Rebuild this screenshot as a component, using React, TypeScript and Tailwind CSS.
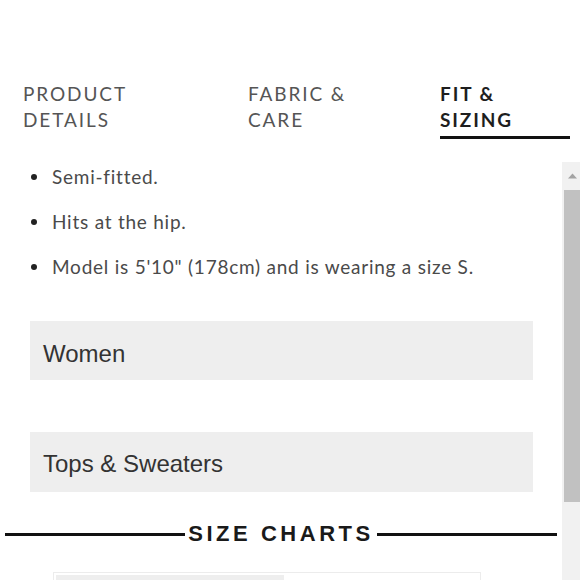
import React from 'react';

const TABS = [
  { label: ['PRODUCT', 'DETAILS'], width: 'w-[225px]', active: false },
  { label: ['FABRIC &', 'CARE'], width: 'w-[192px]', active: false },
  { label: ['FIT &', 'SIZING'], width: 'w-[130px]', active: true },
];

const FIT_NOTES = ['Semi-fitted.', 'Hits at the hip.', 'Model is 5\'10" (178cm) and is wearing a size S.'];

function Scrollbar() {
  return (
    <div className="flex w-[18px] shrink-0 flex-col bg-[#f1f1f1]">
      <div className="flex h-[28px] items-center justify-center pl-[2px]">
        <svg width="9" height="6" viewBox="0 0 9 6">
          <path d="M0 5.5 L4.5 0.5 L9 5.5 Z" fill="#a3a3a3" />
        </svg>
      </div>
      <div className="ml-[2px] h-[312px] bg-[#c1c1c1]" />
    </div>
  );
}

export default function App() {
  return (
    <div className="h-[580px] w-[580px] overflow-hidden bg-white">
      <nav className="flex pl-[23px] pt-[81px] font-['Lato',sans-serif]">
        {TABS.map((tab) => (
          <div key={tab.label[0]} className={tab.width}>
            <div
              className={
                tab.active
                  ? 'border-b-[3px] border-[#111] pb-[3px] text-[19px] font-bold leading-[26px] tracking-[0.1em] text-[#1e1e1e]'
                  : 'pb-[6px] text-[19px] leading-[26px] tracking-[0.1em] text-[#555]'
              }
            >
              {tab.label[0]}
              <br />
              {tab.label[1]}
            </div>
          </div>
        ))}
      </nav>

      <div className="mt-[23px] flex h-[418px] overflow-hidden">
        <div className="flex flex-1 flex-col">
          <ul className="flex flex-col gap-[20px] pl-[31px] pt-[2px] font-['Lato',sans-serif] text-[19px] leading-[25px] tracking-[0.04em] text-[#4a4a4a]">
            {FIT_NOTES.map((note) => (
              <li key={note} className="flex items-center">
                <span className="mr-[15px] h-[6px] w-[6px] rounded-full bg-[#222]" />
                {note}
              </li>
            ))}
          </ul>

          <div className="mt-[42px] flex flex-col gap-[52px] pl-[30px] pr-[29px] font-['Liberation_Sans',Arial,sans-serif] text-[24px] text-[#333]">
            <div className="flex h-[59px] items-center bg-[#eeeeee] px-[13px] pt-[6px]">Women</div>
            <div className="flex h-[60px] items-center bg-[#eeeeee] px-[13px] pt-[4px]">Tops &amp; Sweaters</div>
          </div>

          <div className="mt-[28px] flex items-center pl-[5px] pr-[5px]">
            <div className="h-[3px] flex-1 bg-[#111]" />
            <span className="px-[3px] font-['Liberation_Sans',Arial,sans-serif] text-[22px] font-bold leading-[28px] tracking-[0.16em] text-[#1a1a1a]">
              SIZE CHARTS
            </span>
            <div className="h-[3px] flex-1 bg-[#111]" />
          </div>

          <div className="ml-[53px] mr-[81px] mt-[24px] border border-[#ececec] p-[2px]">
            <div className="h-[20px] w-[228px] bg-[#eeeeee]" />
          </div>
        </div>
        <Scrollbar />
      </div>
    </div>
  );
}
